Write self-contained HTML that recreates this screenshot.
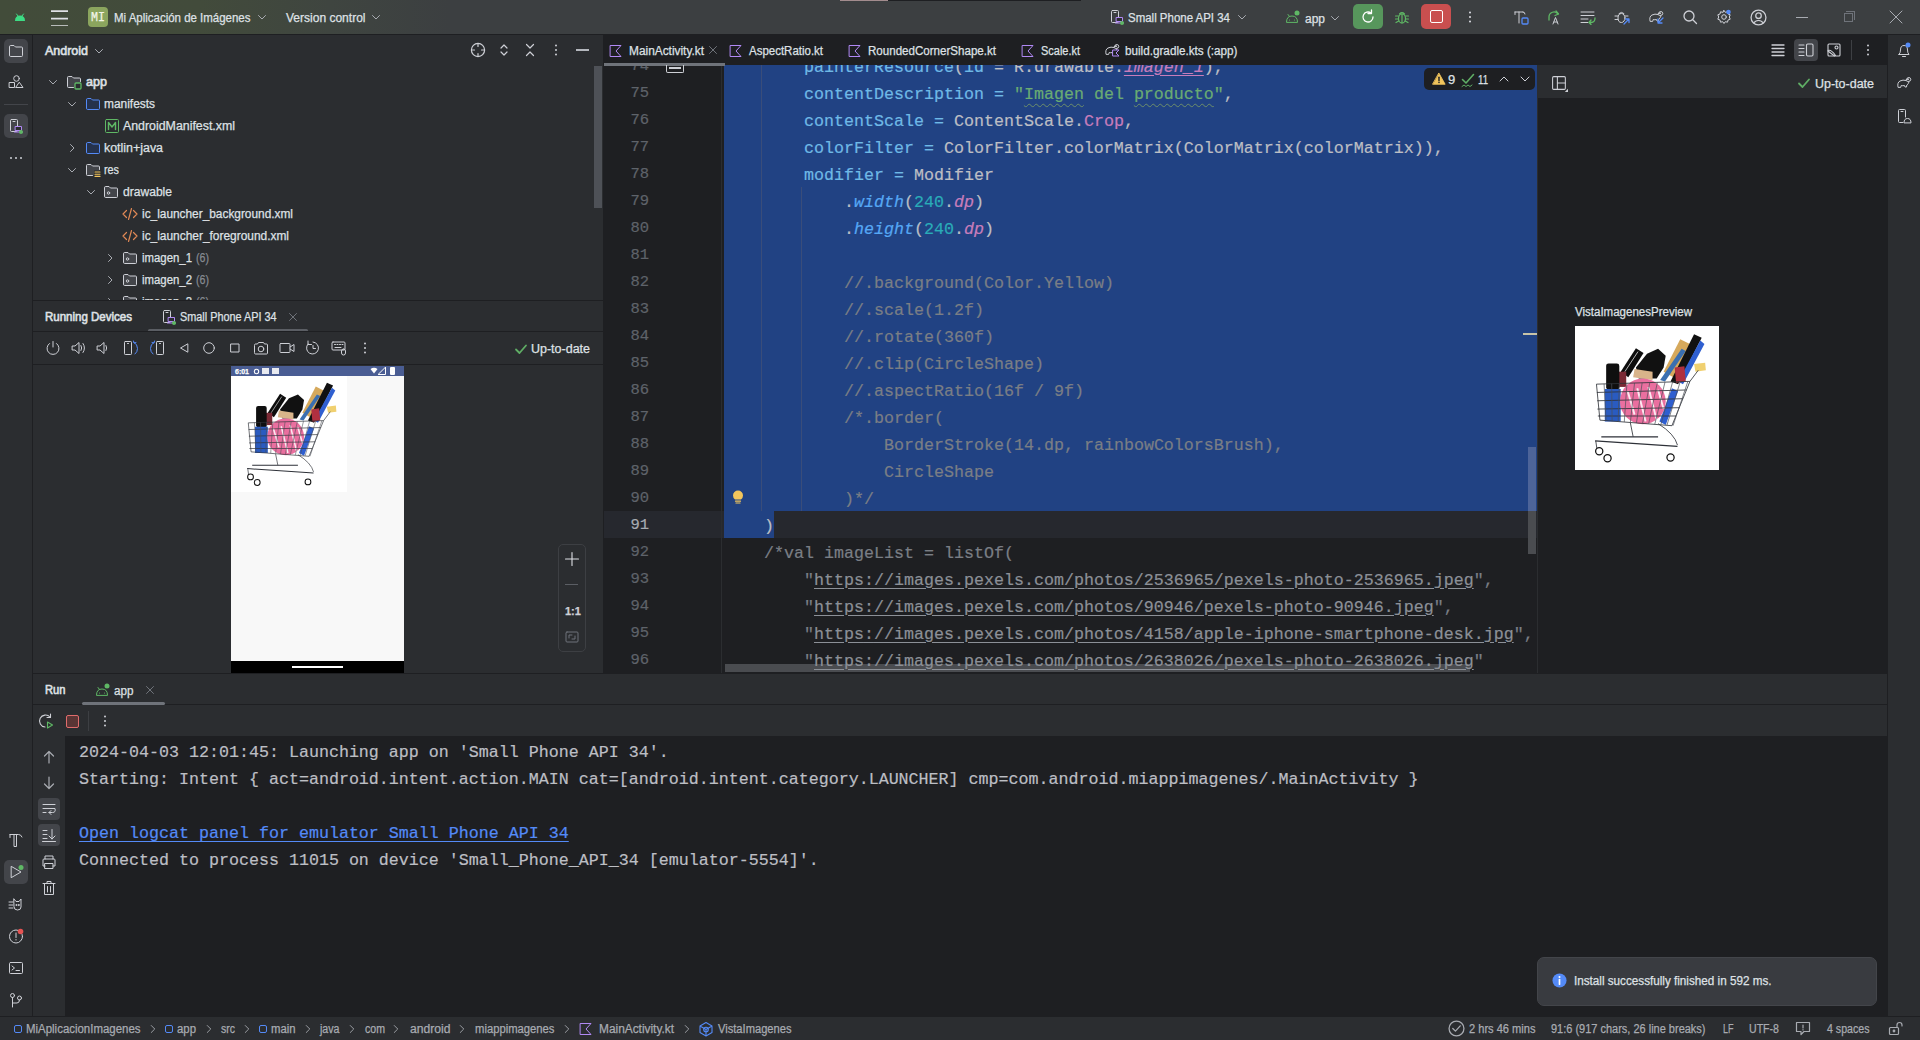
<!DOCTYPE html><html><head><meta charset="utf-8"><style>
*{margin:0;padding:0;box-sizing:border-box}
html,body{width:1920px;height:1040px;overflow:hidden;background:#2b2d30}
body{position:relative;font-family:"Liberation Sans",sans-serif}
body>div,body>span,body>svg{position:absolute}
.t{white-space:pre;-webkit-text-stroke:0.25px currentColor}
.c{position:absolute;white-space:pre;-webkit-text-stroke:0.2px currentColor;font-family:"Liberation Mono",monospace;font-size:16.67px;line-height:27px}
</style></head><body><div style="left:0px;top:0px;width:1920px;height:34px;background:linear-gradient(90deg,#424c3a 0px,#424b3b 200px,#3f4540 330px,#3c3f41 450px);"></div><div style="left:0px;top:34px;width:1920px;height:1px;background:#1e1f22;"></div><div style="left:840px;top:0px;width:48px;height:1px;background:#a38c8e;"></div><div style="left:888px;top:0px;width:193px;height:1px;background:#1e1f22;"></div><div style="left:0px;top:35px;width:32px;height:981px;background:#2b2d30;"></div><div style="left:32px;top:35px;width:1px;height:981px;background:#1e1f22;"></div><div style="left:33px;top:35px;width:570px;height:265px;background:#2b2d30;"></div><div style="left:594px;top:66px;width:8px;height:142px;background:#4e5157;border-radius:0"></div><div style="left:33px;top:300px;width:570px;height:1px;background:#1e1f22;"></div><div style="left:33px;top:301px;width:570px;height:372px;background:#2b2d30;"></div><div style="left:33px;top:331px;width:570px;height:1px;background:#1e1f22;"></div><div style="left:33px;top:364px;width:570px;height:1px;background:#1e1f22;"></div><div style="left:603px;top:35px;width:1px;height:638px;background:#1e1f22;"></div><div style="left:604px;top:65px;width:934px;height:608px;background:#1e1f22;"></div><div style="left:604px;top:511px;width:933px;height:27px;background:#26282e;"></div><div style="left:724px;top:65px;width:813px;height:446px;background:#214283;"></div><div style="left:724px;top:511px;width:50px;height:27px;background:#214283;"></div><div style="left:721px;top:65px;width:1px;height:608px;background:#2b2d30;"></div><div style="left:761px;top:65px;width:1px;height:446px;background:#3a4d7a;"></div><div style="left:801px;top:187px;width:1px;height:324px;background:#3a4d7a;"></div><div style="left:725px;top:664px;width:745px;height:8px;background:#4a4c50;"></div><div style="left:1528px;top:447px;width:8px;height:106px;background:#4a5c8a;border-radius:0"></div><div style="left:1523px;top:333px;width:14px;height:2px;background:#c8c4a8;"></div><div style="left:1537px;top:65px;width:1px;height:608px;background:#2b2d30;"></div><div style="left:1538px;top:35px;width:349px;height:30px;background:#1e1f22;"></div><div style="left:1538px;top:65px;width:349px;height:33px;background:#2b2d30;"></div><div style="left:1538px;top:98px;width:349px;height:575px;background:#1e1f22;"></div><div style="left:1887px;top:35px;width:1px;height:981px;background:#1e1f22;"></div><div style="left:1888px;top:35px;width:32px;height:981px;background:#2b2d30;"></div><div style="left:33px;top:673px;width:1854px;height:1px;background:#1e1f22;"></div><div style="left:33px;top:674px;width:1854px;height:342px;background:#2b2d30;"></div><div style="left:33px;top:704px;width:1854px;height:1px;background:#1e1f22;"></div><div style="left:33px;top:736px;width:1854px;height:280px;background:#1e1f22;"></div><div style="left:33px;top:736px;width:32px;height:280px;background:#2b2d30;"></div><div style="left:82px;top:702px;width:83px;height:3px;background:#6f737a;border-radius:2px"></div><div style="left:0px;top:1016px;width:1920px;height:1px;background:#1e1f22;"></div><div style="left:0px;top:1017px;width:1920px;height:23px;background:#2b2d30;"></div><div style="left:231px;top:366px;width:173px;height:306px;background:#f8f8f8;"></div><div style="left:231px;top:366px;width:173px;height:10px;background:#4a5d93;"></div><div style="left:231px;top:661px;width:173px;height:12px;background:#000000;"></div><div style="left:292px;top:666px;width:51px;height:2px;background:#ffffff;"></div><div style="left:1575px;top:326px;width:144px;height:144px;background:#ffffff;"></div><div style="left:1537px;top:957px;width:340px;height:49px;background:#393b40;border-radius:7px;border:1px solid #43454a"></div><div class="c" style="left:804px;top:53.5px"><span style="color:#6fb9e6;">painterResource</span><span style="color:#bcbec4;">(</span><span style="color:#6fb9e6;">id</span><span style="color:#bcbec4;"> = R.drawable.</span><span style="color:#c77dbb;font-style:italic;text-decoration:underline;text-decoration-thickness:1px;text-underline-offset:3px;">imagen_1</span><span style="color:#bcbec4;">),</span></div><div class="c" style="left:804px;top:80.5px"><span style="color:#6fb9e6;">contentDescription = </span><span style="color:#6aab73;">&quot;</span><span style="color:#6aab73;text-decoration:underline wavy #6d8f6a;text-decoration-thickness:1px;text-underline-offset:4px;">Imagen</span><span style="color:#6aab73;"> del </span><span style="color:#6aab73;text-decoration:underline wavy #6d8f6a;text-decoration-thickness:1px;text-underline-offset:4px;">producto</span><span style="color:#6aab73;">&quot;</span><span style="color:#bcbec4;">,</span></div><div class="c" style="left:804px;top:107.5px"><span style="color:#6fb9e6;">contentScale = </span><span style="color:#bcbec4;">ContentScale.</span><span style="color:#c77dbb;">Crop</span><span style="color:#bcbec4;">,</span></div><div class="c" style="left:804px;top:134.5px"><span style="color:#6fb9e6;">colorFilter = </span><span style="color:#bcbec4;">ColorFilter.colorMatrix(ColorMatrix(colorMatrix)),</span></div><div class="c" style="left:804px;top:161.5px"><span style="color:#6fb9e6;">modifier = </span><span style="color:#bcbec4;">Modifier</span></div><div class="c" style="left:844px;top:188.5px"><span style="color:#bcbec4;">.</span><span style="color:#56a8f5;font-style:italic;">width</span><span style="color:#bcbec4;">(</span><span style="color:#2aacb8;">240</span><span style="color:#bcbec4;">.</span><span style="color:#c77dbb;font-style:italic;">dp</span><span style="color:#bcbec4;">)</span></div><div class="c" style="left:844px;top:215.5px"><span style="color:#bcbec4;">.</span><span style="color:#56a8f5;font-style:italic;">height</span><span style="color:#bcbec4;">(</span><span style="color:#2aacb8;">240</span><span style="color:#bcbec4;">.</span><span style="color:#c77dbb;font-style:italic;">dp</span><span style="color:#bcbec4;">)</span></div><div class="c" style="left:844px;top:269.5px"><span style="color:#7a7e85;">//.background(Color.Yellow)</span></div><div class="c" style="left:844px;top:296.5px"><span style="color:#7a7e85;">//.scale(1.2f)</span></div><div class="c" style="left:844px;top:323.5px"><span style="color:#7a7e85;">//.rotate(360f)</span></div><div class="c" style="left:844px;top:350.5px"><span style="color:#7a7e85;">//.clip(CircleShape)</span></div><div class="c" style="left:844px;top:377.5px"><span style="color:#7a7e85;">//.aspectRatio(16f / 9f)</span></div><div class="c" style="left:844px;top:404.5px"><span style="color:#7a7e85;">/*.border(</span></div><div class="c" style="left:884px;top:431.5px"><span style="color:#7a7e85;">BorderStroke(14.dp, rainbowColorsBrush),</span></div><div class="c" style="left:884px;top:458.5px"><span style="color:#7a7e85;">CircleShape</span></div><div class="c" style="left:844px;top:485.5px"><span style="color:#7a7e85;">)*/</span></div><div class="c" style="left:764px;top:512.5px"><span style="color:#bcbec4;">)</span></div><div class="c" style="left:764px;top:539.5px"><span style="color:#7a7e85;">/*val imageList = listOf(</span></div><div class="c" style="left:804px;top:566.5px"><span style="color:#7a7e85;">&quot;</span><span style="color:#8c9097;text-decoration:underline;text-decoration-thickness:1px;text-underline-offset:3px;">https</span><span style="color:#8c9097;text-decoration:underline;text-decoration-thickness:1px;text-underline-offset:3px;">:</span><span style="color:#8c9097;text-decoration:underline;text-decoration-thickness:1px;text-underline-offset:3px;">//images.pexels.com/photos/2536965/pexels-photo-2536965.jpeg</span><span style="color:#7a7e85;">&quot;,</span></div><div class="c" style="left:804px;top:593.5px"><span style="color:#7a7e85;">&quot;</span><span style="color:#8c9097;text-decoration:underline;text-decoration-thickness:1px;text-underline-offset:3px;">https</span><span style="color:#8c9097;text-decoration:underline;text-decoration-thickness:1px;text-underline-offset:3px;">:</span><span style="color:#8c9097;text-decoration:underline;text-decoration-thickness:1px;text-underline-offset:3px;">//images.pexels.com/photos/90946/pexels-photo-90946.jpeg</span><span style="color:#7a7e85;">&quot;,</span></div><div class="c" style="left:804px;top:620.5px"><span style="color:#7a7e85;">&quot;</span><span style="color:#8c9097;text-decoration:underline;text-decoration-thickness:1px;text-underline-offset:3px;">https</span><span style="color:#8c9097;text-decoration:underline;text-decoration-thickness:1px;text-underline-offset:3px;">:</span><span style="color:#8c9097;text-decoration:underline;text-decoration-thickness:1px;text-underline-offset:3px;">//images.pexels.com/photos/4158/apple-iphone-smartphone-desk.jpg</span><span style="color:#7a7e85;">&quot;,</span></div><div class="c" style="left:804px;top:647.5px"><span style="color:#7a7e85;">&quot;</span><span style="color:#8c9097;text-decoration:underline;text-decoration-thickness:1px;text-underline-offset:3px;">https</span><span style="color:#8c9097;text-decoration:underline;text-decoration-thickness:1px;text-underline-offset:3px;">:</span><span style="color:#8c9097;text-decoration:underline;text-decoration-thickness:1px;text-underline-offset:3px;">//images.pexels.com/photos/2638026/pexels-photo-2638026.jpeg</span><span style="color:#7a7e85;">&quot;</span></div><div class="c" style="left:599px;width:50px;text-align:right;top:52.5px;font-size:15.5px;color:#5f636a">74</div><div class="c" style="left:599px;width:50px;text-align:right;top:79.5px;font-size:15.5px;color:#5f636a">75</div><div class="c" style="left:599px;width:50px;text-align:right;top:106.5px;font-size:15.5px;color:#5f636a">76</div><div class="c" style="left:599px;width:50px;text-align:right;top:133.5px;font-size:15.5px;color:#5f636a">77</div><div class="c" style="left:599px;width:50px;text-align:right;top:160.5px;font-size:15.5px;color:#5f636a">78</div><div class="c" style="left:599px;width:50px;text-align:right;top:187.5px;font-size:15.5px;color:#5f636a">79</div><div class="c" style="left:599px;width:50px;text-align:right;top:214.5px;font-size:15.5px;color:#5f636a">80</div><div class="c" style="left:599px;width:50px;text-align:right;top:241.5px;font-size:15.5px;color:#5f636a">81</div><div class="c" style="left:599px;width:50px;text-align:right;top:268.5px;font-size:15.5px;color:#5f636a">82</div><div class="c" style="left:599px;width:50px;text-align:right;top:295.5px;font-size:15.5px;color:#5f636a">83</div><div class="c" style="left:599px;width:50px;text-align:right;top:322.5px;font-size:15.5px;color:#5f636a">84</div><div class="c" style="left:599px;width:50px;text-align:right;top:349.5px;font-size:15.5px;color:#5f636a">85</div><div class="c" style="left:599px;width:50px;text-align:right;top:376.5px;font-size:15.5px;color:#5f636a">86</div><div class="c" style="left:599px;width:50px;text-align:right;top:403.5px;font-size:15.5px;color:#5f636a">87</div><div class="c" style="left:599px;width:50px;text-align:right;top:430.5px;font-size:15.5px;color:#5f636a">88</div><div class="c" style="left:599px;width:50px;text-align:right;top:457.5px;font-size:15.5px;color:#5f636a">89</div><div class="c" style="left:599px;width:50px;text-align:right;top:484.5px;font-size:15.5px;color:#5f636a">90</div><div class="c" style="left:599px;width:50px;text-align:right;top:511.5px;font-size:15.5px;color:#a8abb1">91</div><div class="c" style="left:599px;width:50px;text-align:right;top:538.5px;font-size:15.5px;color:#5f636a">92</div><div class="c" style="left:599px;width:50px;text-align:right;top:565.5px;font-size:15.5px;color:#5f636a">93</div><div class="c" style="left:599px;width:50px;text-align:right;top:592.5px;font-size:15.5px;color:#5f636a">94</div><div class="c" style="left:599px;width:50px;text-align:right;top:619.5px;font-size:15.5px;color:#5f636a">95</div><div class="c" style="left:599px;width:50px;text-align:right;top:646.5px;font-size:15.5px;color:#5f636a">96</div><div style="left:604px;top:35px;width:934px;height:30px;background:#1e1f22;"></div><div style="left:604px;top:63px;width:121px;height:3px;background:#6f737a;"></div><span class="t" style="left:114px;top:8.3px;line-height:20px;font-size:12.5px;color:#dfe1e5;transform:scaleX(0.9179);transform-origin:0 50%;">Mi Aplicación de Imágenes</span><span class="t" style="left:286px;top:8.3px;line-height:20px;font-size:12.5px;color:#dfe1e5;transform:scaleX(0.9615);transform-origin:0 50%;">Version control</span><span class="t" style="left:1128px;top:8.3px;line-height:20px;font-size:12.5px;color:#dfe1e5;transform:scaleX(0.9174);transform-origin:0 50%;">Small Phone API 34</span><span class="t" style="left:1305px;top:8.5px;line-height:20px;font-size:12.5px;color:#dfe1e5;transform:scaleX(0.9588);transform-origin:0 50%;">app</span><span class="t" style="left:629px;top:41.0px;line-height:20px;font-size:12.5px;color:#dfe1e5;transform:scaleX(0.9499);transform-origin:0 50%;">MainActivity.kt</span><span class="t" style="left:749px;top:41.0px;line-height:20px;font-size:12.5px;color:#dfe1e5;transform:scaleX(0.9182);transform-origin:0 50%;">AspectRatio.kt</span><span class="t" style="left:868px;top:41.0px;line-height:20px;font-size:12.5px;color:#dfe1e5;transform:scaleX(0.9255);transform-origin:0 50%;">RoundedCornerShape.kt</span><span class="t" style="left:1041px;top:41.0px;line-height:20px;font-size:12.5px;color:#dfe1e5;transform:scaleX(0.8770);transform-origin:0 50%;">Scale.kt</span><span class="t" style="left:1125px;top:41.0px;line-height:20px;font-size:12.5px;color:#dfe1e5;transform:scaleX(0.9359);transform-origin:0 50%;">build.gradle.kts (:app)</span><span class="t" style="left:45px;top:41.0px;line-height:20px;font-size:12.5px;-webkit-text-stroke:0.6px currentColor;color:#dfe1e5;transform:scaleX(0.9978);transform-origin:0 50%;">Android</span><span class="t" style="left:86px;top:71.5px;line-height:20px;font-size:12.5px;-webkit-text-stroke:0.6px currentColor;color:#dfe1e5;letter-spacing:0.047px;">app</span><span class="t" style="left:104px;top:93.5px;line-height:20px;font-size:12.5px;color:#dfe1e5;transform:scaleX(0.9533);transform-origin:0 50%;">manifests</span><span class="t" style="left:123px;top:115.5px;line-height:20px;font-size:12.5px;color:#dfe1e5;transform:scaleX(0.9890);transform-origin:0 50%;">AndroidManifest.xml</span><span class="t" style="left:104px;top:137.5px;line-height:20px;font-size:12.5px;color:#dfe1e5;transform:scaleX(0.9929);transform-origin:0 50%;">kotlin+java</span><span class="t" style="left:104px;top:159.5px;line-height:20px;font-size:12.5px;color:#dfe1e5;transform:scaleX(0.8633);transform-origin:0 50%;">res</span><span class="t" style="left:123px;top:181.5px;line-height:20px;font-size:12.5px;color:#dfe1e5;transform:scaleX(0.9658);transform-origin:0 50%;">drawable</span><span class="t" style="left:142px;top:203.5px;line-height:20px;font-size:12.5px;color:#dfe1e5;transform:scaleX(0.9489);transform-origin:0 50%;">ic_launcher_background.xml</span><span class="t" style="left:142px;top:225.5px;line-height:20px;font-size:12.5px;color:#dfe1e5;transform:scaleX(0.9529);transform-origin:0 50%;">ic_launcher_foreground.xml</span><span class="t" style="left:142px;top:247.5px;line-height:20px;font-size:12.5px;color:#dfe1e5;transform:scaleX(0.9106);transform-origin:0 50%;">imagen_1</span><span class="t" style="left:142px;top:269.5px;line-height:20px;font-size:12.5px;color:#dfe1e5;transform:scaleX(0.9106);transform-origin:0 50%;">imagen_2</span><span class="t" style="left:142px;top:291.5px;line-height:20px;font-size:12.5px;color:#dfe1e5;transform:scaleX(0.9106);transform-origin:0 50%;">imagen_3</span><span class="t" style="left:196px;top:247.5px;line-height:20px;font-size:12.5px;color:#868a91;transform:scaleX(0.8507);transform-origin:0 50%;">(6)</span><span class="t" style="left:196px;top:269.5px;line-height:20px;font-size:12.5px;color:#868a91;transform:scaleX(0.8507);transform-origin:0 50%;">(6)</span><span class="t" style="left:196px;top:291.5px;line-height:20px;font-size:12.5px;color:#868a91;transform:scaleX(0.8507);transform-origin:0 50%;">(6)</span><div style="left:33px;top:300px;width:570px;height:1px;background:#1e1f22;"></div><div style="left:33px;top:301px;width:570px;height:30px;background:#2b2d30;"></div><span class="t" style="left:45px;top:307.0px;line-height:20px;font-size:12.5px;-webkit-text-stroke:0.6px currentColor;color:#dfe1e5;transform:scaleX(0.9206);transform-origin:0 50%;">Running Devices</span><span class="t" style="left:180px;top:307.0px;line-height:20px;font-size:12.5px;color:#dfe1e5;transform:scaleX(0.8679);transform-origin:0 50%;">Small Phone API 34</span><div style="left:148px;top:329px;width:160px;height:3px;background:#5b5e64;border-radius:2px"></div><div style="left:33px;top:331px;width:570px;height:1px;background:#1e1f22;"></div><span class="t" style="left:531px;top:338.5px;line-height:20px;font-size:12.5px;color:#dfe1e5;transform:scaleX(0.9989);transform-origin:0 50%;">Up-to-date</span><span class="t" style="left:565px;top:601.0px;line-height:20px;font-size:11px;font-weight:700;color:#ced0d6;">1:1</span><div style="left:558px;top:544px;width:28px;height:108px;background:transparent;border:1px solid #3d3f43;border-radius:5px"></div><span class="t" style="left:1815px;top:73.5px;line-height:20px;font-size:12.5px;color:#dfe1e5;transform:scaleX(0.9989);transform-origin:0 50%;">Up-to-date</span><span class="t" style="left:1575px;top:302.0px;line-height:20px;font-size:12px;color:#dfe1e5;transform:scaleX(0.9602);transform-origin:0 50%;">VistaImagenesPreview</span><span class="t" style="left:45px;top:680.0px;line-height:20px;font-size:12.5px;-webkit-text-stroke:0.6px currentColor;color:#dfe1e5;transform:scaleX(0.8937);transform-origin:0 50%;">Run</span><span class="t" style="left:114px;top:680.5px;line-height:20px;font-size:12.5px;color:#dfe1e5;transform:scaleX(0.9348);transform-origin:0 50%;">app</span><div class="c" style="left:79px;top:739.0px;color:#bcbec4;">2024-04-03 12:01:45: Launching app on &#x27;Small Phone API 34&#x27;.</div><div class="c" style="left:79px;top:766.0px;color:#bcbec4;">Starting: Intent { act=android.intent.action.MAIN cat=[android.intent.category.LAUNCHER] cmp=com.android.miappimagenes/.MainActivity }</div><div class="c" style="left:79px;top:820.0px;color:#548af7;text-decoration:underline;text-decoration-thickness:1px;text-underline-offset:3px;">Open logcat panel for emulator Small Phone API 34</div><div class="c" style="left:79px;top:847.0px;color:#bcbec4;">Connected to process 11015 on device &#x27;Small_Phone_API_34 [emulator-5554]&#x27;.</div><span class="t" style="left:1573.5px;top:971.0px;line-height:20px;font-size:12.5px;color:#dfe1e5;transform:scaleX(0.9350);transform-origin:0 50%;">Install successfully finished in 592 ms.</span><span class="t" style="left:26px;top:1019.0px;line-height:20px;font-size:12.5px;color:#a8abb1;transform:scaleX(0.9155);transform-origin:0 50%;">MiAplicacionImagenes</span><span class="t" style="left:177px;top:1019.0px;line-height:20px;font-size:12.5px;color:#a8abb1;transform:scaleX(0.9109);transform-origin:0 50%;">app</span><span class="t" style="left:221px;top:1019.0px;line-height:20px;font-size:12.5px;color:#a8abb1;transform:scaleX(0.8397);transform-origin:0 50%;">src</span><span class="t" style="left:271px;top:1019.0px;line-height:20px;font-size:12.5px;color:#a8abb1;transform:scaleX(0.9043);transform-origin:0 50%;">main</span><span class="t" style="left:320px;top:1019.0px;line-height:20px;font-size:12.5px;color:#a8abb1;transform:scaleX(0.8501);transform-origin:0 50%;">java</span><span class="t" style="left:364.5px;top:1019.0px;line-height:20px;font-size:12.5px;color:#a8abb1;transform:scaleX(0.8466);transform-origin:0 50%;">com</span><span class="t" style="left:409.5px;top:1019.0px;line-height:20px;font-size:12.5px;color:#a8abb1;transform:scaleX(0.9712);transform-origin:0 50%;">android</span><span class="t" style="left:474.5px;top:1019.0px;line-height:20px;font-size:12.5px;color:#a8abb1;transform:scaleX(0.9008);transform-origin:0 50%;">miappimagenes</span><span class="t" style="left:599px;top:1019.0px;line-height:20px;font-size:12.5px;color:#a8abb1;transform:scaleX(0.9499);transform-origin:0 50%;">MainActivity.kt</span><span class="t" style="left:718px;top:1019.0px;line-height:20px;font-size:12.5px;color:#a8abb1;transform:scaleX(0.8912);transform-origin:0 50%;">VistaImagenes</span><span class="t" style="left:1469px;top:1018.5px;line-height:20px;font-size:12.5px;color:#a8abb1;transform:scaleX(0.8863);transform-origin:0 50%;">2 hrs 46 mins</span><span class="t" style="left:1551px;top:1018.5px;line-height:20px;font-size:12.5px;color:#a8abb1;transform:scaleX(0.8789);transform-origin:0 50%;">91:6 (917 chars, 26 line breaks)</span><span class="t" style="left:1722.5px;top:1018.5px;line-height:20px;font-size:12.5px;color:#a8abb1;transform:scaleX(0.7195);transform-origin:0 50%;">LF</span><span class="t" style="left:1749px;top:1018.5px;line-height:20px;font-size:12.5px;color:#a8abb1;transform:scaleX(0.8469);transform-origin:0 50%;">UTF-8</span><span class="t" style="left:1827px;top:1018.5px;line-height:20px;font-size:12.5px;color:#a8abb1;transform:scaleX(0.8495);transform-origin:0 50%;">4 spaces</span><svg style="left:12.0px;top:9.0px" width="16" height="16" viewBox="0 0 16 16" fill="none" stroke="#3ddc84" stroke-width="1" stroke-linecap="round" stroke-linejoin="round"><path d="M3 12 Q3 6.5 8 6.5 Q13 6.5 13 12 Z" fill="#3ddc84" stroke="none"/><path d="M4.5 5 L6 7 M11.5 5 L10 7" stroke="#3ddc84"/></svg><svg style="left:50.5px;top:8.5px" width="17" height="17" viewBox="0 0 16 16" fill="none" stroke="#dfe1e5" stroke-width="1" stroke-linecap="round" stroke-linejoin="round"><path d="M0 2 H16 M0 9 H16 M0 16 H16" stroke-width="1.6"/></svg><div style="left:88px;top:7px;width:20px;height:20px;background:#8ba55e;border-radius:4px"></div><span class="t" style="left:90.5px;top:7.5px;line-height:20px;font-size:13px;font-family:'Liberation Mono', monospace;color:#f2f5e8;transform:scaleX(0.8969);transform-origin:0 50%;">MI</span><svg style="left:254.0px;top:9.0px" width="16" height="16" viewBox="0 0 16 16" fill="none" stroke="#a8abb1" stroke-width="1" stroke-linecap="round" stroke-linejoin="round"><path d="M4.5 6.5 L8 10 L11.5 6.5"/></svg><svg style="left:368.0px;top:9.0px" width="16" height="16" viewBox="0 0 16 16" fill="none" stroke="#a8abb1" stroke-width="1" stroke-linecap="round" stroke-linejoin="round"><path d="M4.5 6.5 L8 10 L11.5 6.5"/></svg><svg style="left:1234.0px;top:9.0px" width="16" height="16" viewBox="0 0 16 16" fill="none" stroke="#a8abb1" stroke-width="1" stroke-linecap="round" stroke-linejoin="round"><path d="M4.5 6.5 L8 10 L11.5 6.5"/></svg><svg style="left:1327.0px;top:9.5px" width="16" height="16" viewBox="0 0 16 16" fill="none" stroke="#a8abb1" stroke-width="1" stroke-linecap="round" stroke-linejoin="round"><path d="M4.5 6.5 L8 10 L11.5 6.5"/></svg><svg style="left:1109.0px;top:9.0px" width="16" height="16" viewBox="0 0 16 16" fill="none" stroke="#ced0d6" stroke-width="1" stroke-linecap="round" stroke-linejoin="round"><rect x="2.5" y="1.5" width="7" height="12" rx="1"/><path d="M5 3.5 H7"/><rect x="7.5" y="8.5" width="6" height="4" fill="#2b2d30" stroke="#b189f5"/><path d="M6.5 14 H14.5" stroke="#b189f5"/><circle cx="13" cy="14" r="2" fill="#5fb865" stroke="none"/></svg><svg style="left:1284.0px;top:9.0px" width="16" height="16" viewBox="0 0 16 16" fill="none" stroke="#ced0d6" stroke-width="1" stroke-linecap="round" stroke-linejoin="round"><path d="M2.5 13 Q2.5 7 8 7 Q13.5 7 13.5 13 Z" stroke="#5fb865"/><path d="M4 5.5 L5.5 7.5" stroke="#5fb865"/><circle cx="5.5" cy="11" r=".6" fill="#5fb865" stroke="none"/><circle cx="10.5" cy="11" r=".6" fill="#5fb865" stroke="none"/><circle cx="13" cy="4" r="2.5" fill="#5fb865" stroke="none"/></svg><div style="left:1353px;top:4px;width:30px;height:25px;background:#57965c;border-radius:5px"></div><svg style="left:1360.0px;top:8.5px" width="16" height="16" viewBox="0 0 16 16" fill="none" stroke="#ffffff" stroke-width="1.3" stroke-linecap="round" stroke-linejoin="round"><path d="M13 8 A5 5 0 1 1 11 4"/><path d="M11.5 1 V4.5 H8"/></svg><svg style="left:1394.0px;top:9.0px" width="16" height="16" viewBox="0 0 16 16" fill="none" stroke="#5fb865" stroke-width="1.2" stroke-linecap="round" stroke-linejoin="round"><ellipse cx="8" cy="9.5" rx="3.5" ry="4.5"/><path d="M5.5 5 Q8 2.5 10.5 5 M1.5 7 H4.5 M11.5 7 H14.5 M1.5 10 H4.5 M11.5 10 H14.5 M2 13.5 L4.8 12 M14 13.5 L11.2 12 M8 5.5 V14"/></svg><div style="left:1421px;top:4px;width:30px;height:25px;background:#c94f4f;border-radius:5px"></div><div style="left:1430px;top:10px;width:13px;height:13px;background:transparent;border:1.6px solid #ffffff;border-radius:2px"></div><svg style="left:1462.0px;top:9.0px" width="16" height="16" viewBox="0 0 16 16" fill="none" stroke="#ced0d6" stroke-width="1" stroke-linecap="round" stroke-linejoin="round"><circle cx="8" cy="3.5" r="1" fill="#dfe1e5" stroke="none"/><circle cx="8" cy="8" r="1" fill="#dfe1e5" stroke="none"/><circle cx="8" cy="12.5" r="1" fill="#dfe1e5" stroke="none"/></svg><svg style="left:1513.0px;top:9.0px" width="16" height="16" viewBox="0 0 16 16" fill="none" stroke="#ced0d6" stroke-width="1" stroke-linecap="round" stroke-linejoin="round"><path d="M2 3 H10 M6 3 V14 M2 3 V5.5 M10 3 Q12 3 12 5"/><rect x="9" y="9" width="6" height="6" rx="1" stroke="#548af7" stroke-width="1.3"/></svg><svg style="left:1546.0px;top:9.0px" width="16" height="16" viewBox="0 0 16 16" fill="none" stroke="#ced0d6" stroke-width="1" stroke-linecap="round" stroke-linejoin="round"><path d="M3 11 V8 A5 5 0 0 1 12 5" stroke="#5fb865" stroke-width="1.3"/><path d="M10 2 L12.5 5 L9 6.5" stroke="#5fb865" stroke-width="1.3"/><path d="M7 15 L9.5 8.5 L12 15 M8 13 H11"/></svg><svg style="left:1580.0px;top:9.0px" width="16" height="16" viewBox="0 0 16 16" fill="none" stroke="#ced0d6" stroke-width="1" stroke-linecap="round" stroke-linejoin="round"><path d="M1 3 H14 M1 6.5 H14 M1 10 H8 M1 13.5 H8"/><path d="M15 9 Q15 13.5 11 13.5 H9 M11 11 L9 13.5 L11 15.5" stroke="#5fb865" stroke-width="1.3"/></svg><svg style="left:1614.0px;top:9.0px" width="16" height="16" viewBox="0 0 16 16" fill="none" stroke="#ced0d6" stroke-width="1" stroke-linecap="round" stroke-linejoin="round"><ellipse cx="7.5" cy="9" rx="3.5" ry="4.5"/><path d="M5 4.5 Q7.5 2 10 4.5 M1 7 H4 M1 10.5 H4 M11 7 H14"/><path d="M10 15 L15 10 M11.5 10 H15 V13.5" stroke="#548af7" stroke-width="1.3"/></svg><svg style="left:1648.0px;top:8.0px" width="16" height="16" viewBox="0 0 16 16" fill="none" stroke="#ced0d6" stroke-width="1" stroke-linecap="round" stroke-linejoin="round"><path d="M2 13 Q1 8.5 4 7 Q7 5.5 10 6.5 Q10.5 3.5 13 3.5 Q15 3.8 14.8 5.8 Q14.5 7.2 13.2 7 Q12.8 10 10.8 11 L10.5 13 H9 L8.5 11.5 Q6.8 12 5.2 11.5 L4.8 13 Z M10 6.5 Q11 8 12.5 7.5"/><circle cx="11.8" cy="5.2" r=".5" fill="#ced0d6"/><path d="M10 15 L15 10 M10 11 V15 H14" stroke="#548af7" stroke-width="1.3"/></svg><svg style="left:1682.0px;top:9.0px" width="16" height="16" viewBox="0 0 16 16" fill="none" stroke="#ced0d6" stroke-width="1.3" stroke-linecap="round" stroke-linejoin="round"><circle cx="7" cy="7" r="5"/><path d="M10.8 10.8 L14.5 14.5"/></svg><svg style="left:1716.0px;top:9.0px" width="16" height="16" viewBox="0 0 16 16" fill="none" stroke="#ced0d6" stroke-width="1" stroke-linecap="round" stroke-linejoin="round"><path d="M8 1.5 L9.3 3.3 L11.5 2.8 L12 5 L14.2 5.8 L13.3 8 L14.2 10.2 L12 11 L11.5 13.2 L9.3 12.7 L8 14.5 L6.7 12.7 L4.5 13.2 L4 11 L1.8 10.2 L2.7 8 L1.8 5.8 L4 5 L4.5 2.8 L6.7 3.3 Z"/><circle cx="8" cy="8" r="2.3"/><circle cx="12.5" cy="3" r="2.3" fill="#548af7" stroke="none"/></svg><svg style="left:1749.5px;top:8.5px" width="17" height="17" viewBox="0 0 16 16" fill="none" stroke="#ced0d6" stroke-width="1.2" stroke-linecap="round" stroke-linejoin="round"><circle cx="8" cy="8" r="7"/><circle cx="8" cy="6.3" r="2.6"/><path d="M3.5 13 Q8 8.5 12.5 13"/></svg><div style="left:1796px;top:17px;width:12px;height:1px;background:#a8abb1;"></div><div style="left:1844px;top:13px;width:9px;height:9px;background:transparent;border:1px solid #6f737a"></div><div style="left:1846px;top:11px;width:9px;height:9px;background:transparent;border-top:1px solid #6f737a;border-right:1px solid #6f737a"></div><svg style="left:1888.0px;top:9.0px" width="16" height="16" viewBox="0 0 16 16" fill="none" stroke="#a8abb1" stroke-width="1" stroke-linecap="round" stroke-linejoin="round"><path d="M2 2 L14 14 M14 2 L2 14"/></svg><svg style="left:91.0px;top:43.0px" width="16" height="16" viewBox="0 0 16 16" fill="none" stroke="#a8abb1" stroke-width="1" stroke-linecap="round" stroke-linejoin="round"><path d="M4.5 6.5 L8 10 L11.5 6.5"/></svg><svg style="left:470.0px;top:42.0px" width="16" height="16" viewBox="0 0 16 16" fill="none" stroke="#ced0d6" stroke-width="1.2" stroke-linecap="round" stroke-linejoin="round"><circle cx="8" cy="8" r="6.6"/><path d="M8 1.5 V4.5 M8 11.5 V14.5 M1.5 8 H4.5 M11.5 8 H14.5"/></svg><svg style="left:496.0px;top:42.0px" width="16" height="16" viewBox="0 0 16 16" fill="none" stroke="#ced0d6" stroke-width="1.2" stroke-linecap="round" stroke-linejoin="round"><path d="M5 6 L8 3 L11 6 M5 10 L8 13 L11 10"/></svg><svg style="left:522.0px;top:42.0px" width="16" height="16" viewBox="0 0 16 16" fill="none" stroke="#ced0d6" stroke-width="1.2" stroke-linecap="round" stroke-linejoin="round"><path d="M4.5 2.5 L8 6 L11.5 2.5 M4.5 13.5 L8 10 L11.5 13.5"/></svg><svg style="left:548.0px;top:42.0px" width="16" height="16" viewBox="0 0 16 16" fill="none" stroke="#ced0d6" stroke-width="1" stroke-linecap="round" stroke-linejoin="round"><circle cx="8" cy="3.5" r="1" fill="#ced0d6" stroke="none"/><circle cx="8" cy="8" r="1" fill="#ced0d6" stroke="none"/><circle cx="8" cy="12.5" r="1" fill="#ced0d6" stroke="none"/></svg><div style="left:576px;top:49.3px;width:13px;height:1.4px;background:#b4b7bd;"></div><svg style="left:45.0px;top:73.5px" width="16" height="16" viewBox="0 0 16 16" fill="none" stroke="#a8abb1" stroke-width="1" stroke-linecap="round" stroke-linejoin="round"><path d="M4.5 6.5 L8 10 L11.5 6.5"/></svg><svg style="left:64.0px;top:95.5px" width="16" height="16" viewBox="0 0 16 16" fill="none" stroke="#a8abb1" stroke-width="1" stroke-linecap="round" stroke-linejoin="round"><path d="M4.5 6.5 L8 10 L11.5 6.5"/></svg><svg style="left:64.0px;top:161.5px" width="16" height="16" viewBox="0 0 16 16" fill="none" stroke="#a8abb1" stroke-width="1" stroke-linecap="round" stroke-linejoin="round"><path d="M4.5 6.5 L8 10 L11.5 6.5"/></svg><svg style="left:83.0px;top:183.5px" width="16" height="16" viewBox="0 0 16 16" fill="none" stroke="#a8abb1" stroke-width="1" stroke-linecap="round" stroke-linejoin="round"><path d="M4.5 6.5 L8 10 L11.5 6.5"/></svg><svg style="left:64.0px;top:139.5px" width="16" height="16" viewBox="0 0 16 16" fill="none" stroke="#a8abb1" stroke-width="1" stroke-linecap="round" stroke-linejoin="round"><path d="M6.5 4.5 L10 8 L6.5 11.5"/></svg><svg style="left:102.0px;top:249.5px" width="16" height="16" viewBox="0 0 16 16" fill="none" stroke="#a8abb1" stroke-width="1" stroke-linecap="round" stroke-linejoin="round"><path d="M6.5 4.5 L10 8 L6.5 11.5"/></svg><svg style="left:102.0px;top:271.5px" width="16" height="16" viewBox="0 0 16 16" fill="none" stroke="#a8abb1" stroke-width="1" stroke-linecap="round" stroke-linejoin="round"><path d="M6.5 4.5 L10 8 L6.5 11.5"/></svg><svg style="left:102.0px;top:293.5px" width="16" height="16" viewBox="0 0 16 16" fill="none" stroke="#a8abb1" stroke-width="1" stroke-linecap="round" stroke-linejoin="round"><path d="M6.5 4.5 L10 8 L6.5 11.5"/></svg><svg style="left:66.0px;top:73.5px" width="16" height="16" viewBox="0 0 16 16" fill="none" stroke="#ced0d6" stroke-width="1" stroke-linecap="round" stroke-linejoin="round"><path d="M1.5 3.5 Q1.5 2.5 2.5 2.5 H6 L7.5 4 H13.5 Q14.5 4 14.5 5 V12.5 Q14.5 13.5 13.5 13.5 H2.5 Q1.5 13.5 1.5 12.5 Z" fill="#43454a" stroke="none"/><path d="M14.5 7.5 V5 Q14.5 4 13.5 4 H7.5 L6 2.5 H2.5 Q1.5 2.5 1.5 3.5 V12.5 Q1.5 13.5 2.5 13.5 H7.5"/><rect x="9" y="9" width="6" height="6" rx="1" fill="#2b2d30" stroke="#5fb865" stroke-width="1.3"/></svg><svg style="left:85.0px;top:95.5px" width="16" height="16" viewBox="0 0 16 16" fill="none" stroke="#548af7" stroke-width="1" stroke-linecap="round" stroke-linejoin="round"><path d="M1.5 3.5 Q1.5 2.5 2.5 2.5 H6 L7.5 4 H13.5 Q14.5 4 14.5 5 V12.5 Q14.5 13.5 13.5 13.5 H2.5 Q1.5 13.5 1.5 12.5 Z" fill="#25324d"/></svg><svg style="left:85.0px;top:139.5px" width="16" height="16" viewBox="0 0 16 16" fill="none" stroke="#548af7" stroke-width="1" stroke-linecap="round" stroke-linejoin="round"><path d="M1.5 3.5 Q1.5 2.5 2.5 2.5 H6 L7.5 4 H13.5 Q14.5 4 14.5 5 V12.5 Q14.5 13.5 13.5 13.5 H2.5 Q1.5 13.5 1.5 12.5 Z" fill="#25324d"/></svg><svg style="left:85.0px;top:161.5px" width="16" height="16" viewBox="0 0 16 16" fill="none" stroke="#ced0d6" stroke-width="1" stroke-linecap="round" stroke-linejoin="round"><path d="M1.5 3.5 Q1.5 2.5 2.5 2.5 H6 L7.5 4 H13.5 Q14.5 4 14.5 5 V12.5 Q14.5 13.5 13.5 13.5 H2.5 Q1.5 13.5 1.5 12.5 Z" fill="#43454a" stroke="none"/><path d="M14.5 7.5 V5 Q14.5 4 13.5 4 H7.5 L6 2.5 H2.5 Q1.5 2.5 1.5 3.5 V12.5 Q1.5 13.5 2.5 13.5 H7.5"/><rect x="9" y="8.5" width="7" height="7" fill="#2b2d30" stroke="none"/><path d="M10 10 H15 M10 12.2 H15 M10 14.4 H15" stroke="#f2c55c" stroke-width="1.1"/></svg><svg style="left:104.0px;top:117.5px" width="16" height="16" viewBox="0 0 16 16" fill="none" stroke="#ced0d6" stroke-width="1" stroke-linecap="round" stroke-linejoin="round"><rect x="1.5" y="1.5" width="13" height="13" rx="1" stroke="#5fb865"/><path d="M4.5 11.5 V4.5 L8 9 L11.5 4.5 V11.5" stroke="#5fb865" stroke-width="1.4" fill="#5fb865" fill-opacity=".0"/></svg><svg style="left:103.0px;top:183.5px" width="16" height="16" viewBox="0 0 16 16" fill="none" stroke="#ced0d6" stroke-width="1" stroke-linecap="round" stroke-linejoin="round"><path d="M1.5 3.5 Q1.5 2.5 2.5 2.5 H6 L7.5 4 H13.5 Q14.5 4 14.5 5 V12.5 Q14.5 13.5 13.5 13.5 H2.5 Q1.5 13.5 1.5 12.5 Z" fill="#43454a"/><circle cx="5.5" cy="9" r="1.2"/></svg><svg style="left:122.0px;top:249.5px" width="16" height="16" viewBox="0 0 16 16" fill="none" stroke="#ced0d6" stroke-width="1" stroke-linecap="round" stroke-linejoin="round"><path d="M1.5 3.5 Q1.5 2.5 2.5 2.5 H6 L7.5 4 H13.5 Q14.5 4 14.5 5 V12.5 Q14.5 13.5 13.5 13.5 H2.5 Q1.5 13.5 1.5 12.5 Z" fill="#43454a"/><circle cx="5.5" cy="9" r="1.2"/></svg><svg style="left:122.0px;top:271.5px" width="16" height="16" viewBox="0 0 16 16" fill="none" stroke="#ced0d6" stroke-width="1" stroke-linecap="round" stroke-linejoin="round"><path d="M1.5 3.5 Q1.5 2.5 2.5 2.5 H6 L7.5 4 H13.5 Q14.5 4 14.5 5 V12.5 Q14.5 13.5 13.5 13.5 H2.5 Q1.5 13.5 1.5 12.5 Z" fill="#43454a"/><circle cx="5.5" cy="9" r="1.2"/></svg><svg style="left:122.0px;top:293.5px" width="16" height="16" viewBox="0 0 16 16" fill="none" stroke="#ced0d6" stroke-width="1" stroke-linecap="round" stroke-linejoin="round"><path d="M1.5 3.5 Q1.5 2.5 2.5 2.5 H6 L7.5 4 H13.5 Q14.5 4 14.5 5 V12.5 Q14.5 13.5 13.5 13.5 H2.5 Q1.5 13.5 1.5 12.5 Z" fill="#43454a"/><circle cx="5.5" cy="9" r="1.2"/></svg><svg style="left:122.0px;top:205.5px" width="16" height="16" viewBox="0 0 16 16" fill="none" stroke="#ced0d6" stroke-width="1" stroke-linecap="round" stroke-linejoin="round"><path d="M4.5 4.5 L1 8 L4.5 11.5 M11.5 4.5 L15 8 L11.5 11.5 M9.5 2.5 L6.5 13.5" stroke="#e08855" stroke-width="1.2"/></svg><svg style="left:122.0px;top:227.5px" width="16" height="16" viewBox="0 0 16 16" fill="none" stroke="#ced0d6" stroke-width="1" stroke-linecap="round" stroke-linejoin="round"><path d="M4.5 4.5 L1 8 L4.5 11.5 M11.5 4.5 L15 8 L11.5 11.5 M9.5 2.5 L6.5 13.5" stroke="#e08855" stroke-width="1.2"/></svg><div style="left:33px;top:300px;width:570px;height:1px;background:#1e1f22;"></div><div style="left:33px;top:301px;width:570px;height:30px;background:#2b2d30;"></div><span class="t" style="left:45px;top:307.0px;line-height:20px;font-size:12.5px;-webkit-text-stroke:0.6px currentColor;color:#dfe1e5;transform:scaleX(0.9206);transform-origin:0 50%;">Running Devices</span><span class="t" style="left:180px;top:307.0px;line-height:20px;font-size:12.5px;color:#dfe1e5;transform:scaleX(0.8679);transform-origin:0 50%;">Small Phone API 34</span><div style="left:148px;top:329px;width:160px;height:3px;background:#5b5e64;border-radius:2px"></div><div style="left:33px;top:331px;width:570px;height:1px;background:#1e1f22;"></div><svg style="left:161.0px;top:309.0px" width="16" height="16" viewBox="0 0 16 16" fill="none" stroke="#ced0d6" stroke-width="1" stroke-linecap="round" stroke-linejoin="round"><rect x="2.5" y="1.5" width="7" height="12" rx="1"/><path d="M5 3.5 H7"/><rect x="7.5" y="8.5" width="6" height="4" fill="#2b2d30" stroke="#b189f5"/><path d="M6.5 14 H14.5" stroke="#b189f5"/><circle cx="13" cy="14" r="2" fill="#5fb865" stroke="none"/></svg><svg style="left:285.0px;top:309.0px" width="16" height="16" viewBox="0 0 16 16" fill="none" stroke="#6f737a" stroke-width="1" stroke-linecap="round" stroke-linejoin="round"><path d="M4.5 4.5 L11.5 11.5 M11.5 4.5 L4.5 11.5"/></svg><svg style="left:607.5px;top:42.5px" width="16" height="16" viewBox="0 0 16 16" fill="none" stroke="#ced0d6" stroke-width="1" stroke-linecap="round" stroke-linejoin="round"><path d="M2.5 2.5 H13 L8 8 L13 13.5 H2.5 Z" stroke="#b189f5"/></svg><svg style="left:728.0px;top:42.5px" width="16" height="16" viewBox="0 0 16 16" fill="none" stroke="#ced0d6" stroke-width="1" stroke-linecap="round" stroke-linejoin="round"><path d="M2.5 2.5 H13 L8 8 L13 13.5 H2.5 Z" stroke="#b189f5"/></svg><svg style="left:847.0px;top:42.5px" width="16" height="16" viewBox="0 0 16 16" fill="none" stroke="#ced0d6" stroke-width="1" stroke-linecap="round" stroke-linejoin="round"><path d="M2.5 2.5 H13 L8 8 L13 13.5 H2.5 Z" stroke="#b189f5"/></svg><svg style="left:1020.0px;top:42.5px" width="16" height="16" viewBox="0 0 16 16" fill="none" stroke="#ced0d6" stroke-width="1" stroke-linecap="round" stroke-linejoin="round"><path d="M2.5 2.5 H13 L8 8 L13 13.5 H2.5 Z" stroke="#b189f5"/></svg><svg style="left:705.0px;top:42.0px" width="16" height="16" viewBox="0 0 16 16" fill="none" stroke="#6f737a" stroke-width="1" stroke-linecap="round" stroke-linejoin="round"><path d="M4.5 4.5 L11.5 11.5 M11.5 4.5 L4.5 11.5"/></svg><svg style="left:1104.0px;top:41.0px" width="16" height="16" viewBox="0 0 16 16" fill="none" stroke="#ced0d6" stroke-width="1" stroke-linecap="round" stroke-linejoin="round"><path d="M2 13 Q1 8.5 4 7 Q7 5.5 10 6.5 Q10.5 3.5 13 3.5 Q15 3.8 14.8 5.8 Q14.5 7.2 13.2 7 Q12.8 10 10.8 11 L10.5 13 H9 L8.5 11.5 Q6.8 12 5.2 11.5 L4.8 13 Z M10 6.5 Q11 8 12.5 7.5"/><circle cx="11.8" cy="5.2" r=".5" fill="#ced0d6"/><path d="M9 9 H15 L12 12 L15 15 H9 Z" stroke="#b189f5" fill="#1e1f22"/></svg><svg style="left:1770.0px;top:42.0px" width="16" height="16" viewBox="0 0 16 16" fill="none" stroke="#ced0d6" stroke-width="1.3" stroke-linecap="round" stroke-linejoin="round"><path d="M2 3 H14 M2 6.5 H14 M2 10 H14 M2 13.5 H14"/></svg><div style="left:1794px;top:39px;width:24px;height:22px;background:#43454a;border-radius:4px"></div><svg style="left:1798.0px;top:42.0px" width="16" height="16" viewBox="0 0 16 16" fill="none" stroke="#ced0d6" stroke-width="1.1" stroke-linecap="round" stroke-linejoin="round"><path d="M1 3 H6 M1 6.5 H6 M1 10 H6 M1 13.5 H6"/><rect x="8.5" y="2" width="6.5" height="12" rx="1.2"/></svg><svg style="left:1826.0px;top:42.0px" width="16" height="16" viewBox="0 0 16 16" fill="none" stroke="#ced0d6" stroke-width="1.1" stroke-linecap="round" stroke-linejoin="round"><rect x="2" y="2" width="12" height="12" rx="1"/><path d="M2 9 L8.5 14 M2 8.5 Q5 7 9.5 13.5"/><circle cx="10.5" cy="5.5" r="1.5"/></svg><div style="left:1851px;top:40px;width:1px;height:20px;background:#3d3f43;"></div><svg style="left:1860.0px;top:42.0px" width="16" height="16" viewBox="0 0 16 16" fill="none" stroke="#ced0d6" stroke-width="1" stroke-linecap="round" stroke-linejoin="round"><circle cx="8" cy="3.5" r="1" fill="#ced0d6" stroke="none"/><circle cx="8" cy="8" r="1" fill="#ced0d6" stroke="none"/><circle cx="8" cy="12.5" r="1" fill="#ced0d6" stroke="none"/></svg><svg style="left:1896.0px;top:42.0px" width="16" height="16" viewBox="0 0 16 16" fill="none" stroke="#ced0d6" stroke-width="1" stroke-linecap="round" stroke-linejoin="round"><path d="M3 12.5 H13 Q11.5 11 11.5 8 Q11.5 3.5 8 3.5 Q4.5 3.5 4.5 8 Q4.5 11 3 12.5 Z M6.5 14.5 H9.5"/><circle cx="12" cy="3" r="2.5" fill="#548af7" stroke="none"/></svg><svg style="left:1896.0px;top:74.0px" width="16" height="16" viewBox="0 0 16 16" fill="none" stroke="#ced0d6" stroke-width="1" stroke-linecap="round" stroke-linejoin="round"><path d="M2 13 Q1 8.5 4 7 Q7 5.5 10 6.5 Q10.5 3.5 13 3.5 Q15 3.8 14.8 5.8 Q14.5 7.2 13.2 7 Q12.8 10 10.8 11 L10.5 13 H9 L8.5 11.5 Q6.8 12 5.2 11.5 L4.8 13 Z M10 6.5 Q11 8 12.5 7.5"/><circle cx="11.8" cy="5.2" r=".5" fill="#ced0d6"/></svg><svg style="left:1896.0px;top:108.0px" width="16" height="16" viewBox="0 0 16 16" fill="none" stroke="#ced0d6" stroke-width="1" stroke-linecap="round" stroke-linejoin="round"><path d="M7 14.5 H3.5 Q2.5 14.5 2.5 13.5 V2.5 Q2.5 1.5 3.5 1.5 H8.5 Q9.5 1.5 9.5 2.5 V9 M5 3.5 H7"/><path d="M8 14.5 Q8 10.5 11.5 10.5 Q15 10.5 15 14.5 Z"/></svg><svg style="left:45.0px;top:340.0px" width="16" height="16" viewBox="0 0 16 16" fill="none" stroke="#ced0d6" stroke-width="1" stroke-linecap="round" stroke-linejoin="round"><path d="M8 1.5 V7"/><path d="M4.5 3.5 A6 6 0 1 0 11.5 3.5"/></svg><svg style="left:70.5px;top:340.0px" width="16" height="16" viewBox="0 0 16 16" fill="none" stroke="#ced0d6" stroke-width="1" stroke-linecap="round" stroke-linejoin="round"><path d="M1.5 6 H4 L8 2.5 V13.5 L4 10 H1.5 Z M10 5.5 Q11.5 8 10 10.5 M12 3.5 Q15 8 12 12.5"/></svg><svg style="left:95.0px;top:340.0px" width="16" height="16" viewBox="0 0 16 16" fill="none" stroke="#ced0d6" stroke-width="1" stroke-linecap="round" stroke-linejoin="round"><path d="M2.5 6 H5 L9 2.5 V13.5 L5 10 H2.5 Z M11 5.5 Q12.5 8 11 10.5"/></svg><svg style="left:122.5px;top:340.0px" width="16" height="16" viewBox="0 0 16 16" fill="none" stroke="#ced0d6" stroke-width="1" stroke-linecap="round" stroke-linejoin="round"><rect x="1.5" y="1.5" width="7" height="13" rx=".8"/><path d="M4.5 3.5 H5.5"/><path d="M11 2.5 Q14.5 4 14.5 8.5 Q14.5 12 12 14" stroke="#548af7"/><path d="M10.5 1 L11 3 L13 2.5" stroke="#548af7"/></svg><svg style="left:149.0px;top:340.0px" width="16" height="16" viewBox="0 0 16 16" fill="none" stroke="#ced0d6" stroke-width="1" stroke-linecap="round" stroke-linejoin="round"><rect x="7.5" y="1.5" width="7" height="13" rx=".8"/><path d="M10.5 3.5 H11.5"/><path d="M5 2.5 Q1.5 4 1.5 8.5 Q1.5 12 4 14" stroke="#548af7"/><path d="M5.5 1 L5 3 L3 2.5" stroke="#548af7"/></svg><svg style="left:175.5px;top:340.0px" width="16" height="16" viewBox="0 0 16 16" fill="none" stroke="#ced0d6" stroke-width="1" stroke-linecap="round" stroke-linejoin="round"><path d="M11.5 4 L4.5 8 L11.5 12 Z"/></svg><svg style="left:201.0px;top:340.0px" width="16" height="16" viewBox="0 0 16 16" fill="none" stroke="#ced0d6" stroke-width="1" stroke-linecap="round" stroke-linejoin="round"><circle cx="8" cy="8" r="5.3"/></svg><svg style="left:227.0px;top:340.0px" width="16" height="16" viewBox="0 0 16 16" fill="none" stroke="#ced0d6" stroke-width="1" stroke-linecap="round" stroke-linejoin="round"><rect x="4" y="4" width="8" height="8"/></svg><svg style="left:253.0px;top:340.0px" width="16" height="16" viewBox="0 0 16 16" fill="none" stroke="#ced0d6" stroke-width="1" stroke-linecap="round" stroke-linejoin="round"><path d="M1.5 5 Q1.5 4 2.5 4 H4.5 L5.5 2.5 H10.5 L11.5 4 H13.5 Q14.5 4 14.5 5 V13 Q14.5 14 13.5 14 H2.5 Q1.5 14 1.5 13 Z"/><circle cx="8" cy="9" r="2.8"/></svg><svg style="left:279.0px;top:340.0px" width="16" height="16" viewBox="0 0 16 16" fill="none" stroke="#ced0d6" stroke-width="1" stroke-linecap="round" stroke-linejoin="round"><rect x="1" y="3.5" width="10" height="9" rx=".8"/><path d="M11 7 L15 4.5 V11.5 L11 9"/></svg><svg style="left:305.0px;top:340.0px" width="16" height="16" viewBox="0 0 16 16" fill="none" stroke="#ced0d6" stroke-width="1" stroke-linecap="round" stroke-linejoin="round"><path d="M3 4 A6 6 0 1 0 8 2" /><path d="M3 1 V4.5 H6.5"/><path d="M8 5.5 V8.5 H10.5"/></svg><svg style="left:331.0px;top:340.0px" width="16" height="16" viewBox="0 0 16 16" fill="none" stroke="#ced0d6" stroke-width="1" stroke-linecap="round" stroke-linejoin="round"><rect x="1" y="2" width="13" height="8" rx="1"/><path d="M3.5 4.5 H4.5 M6 4.5 H7 M8.5 4.5 H9.5 M11 4.5 H12 M4 7.5 H10"/><rect x="10.5" y="9" width="4" height="6" rx="2"/></svg><svg style="left:357.0px;top:340.0px" width="16" height="16" viewBox="0 0 16 16" fill="none" stroke="#ced0d6" stroke-width="1" stroke-linecap="round" stroke-linejoin="round"><circle cx="8" cy="3.5" r="1" fill="#ced0d6" stroke="none"/><circle cx="8" cy="8" r="1" fill="#ced0d6" stroke="none"/><circle cx="8" cy="12.5" r="1" fill="#ced0d6" stroke="none"/></svg><svg style="left:513.0px;top:340.5px" width="16" height="16" viewBox="0 0 16 16" fill="none" stroke="#5fad65" stroke-width="1" stroke-linecap="round" stroke-linejoin="round"><path d="M3 8.5 L6.5 12 L13 4.5" stroke-width="1.8"/></svg><svg style="left:563.5px;top:550.5px" width="16" height="16" viewBox="0 0 16 16" fill="none" stroke="#dfe1e5" stroke-width="1.1" stroke-linecap="round" stroke-linejoin="round"><path d="M8 1.5 V14.5 M1.5 8 H14.5"/></svg><div style="left:565px;top:584px;width:13px;height:1px;background:#5b5e64;"></div><svg style="left:563.5px;top:629.0px" width="16" height="16" viewBox="0 0 16 16" fill="none" stroke="#6f737a" stroke-width="1" stroke-linecap="round" stroke-linejoin="round"><rect x="2" y="3" width="12" height="10" rx="1"/><path d="M5 9 V6 H8 M11 7 V10 H8"/></svg><svg style="left:730.0px;top:489.0px" width="16" height="16" viewBox="0 0 16 16" fill="none" stroke="#f2c55c" stroke-width="1" stroke-linecap="round" stroke-linejoin="round"><path d="M5 10.5 Q3 9 3 6.5 A5 5 0 0 1 13 6.5 Q13 9 11 10.5 Z" fill="#f2c55c" stroke="none"/><path d="M5.5 12.2 H10.5 M6 14 H10" stroke="#f2c55c" stroke-width="1.2"/></svg><div style="left:1424px;top:68px;width:111px;height:22px;background:#1e1f22;border-radius:5px"></div><svg style="left:1432.0px;top:71.5px" width="14" height="14" viewBox="0 0 16 16" fill="none" stroke="#ced0d6" stroke-width="1" stroke-linecap="round" stroke-linejoin="round"><path d="M8 1.5 L15 14 H1 Z" fill="#f2c55c" stroke="#f2c55c" stroke-linejoin="round"/><path d="M8 6 V10" stroke="#1e1f22" stroke-width="1.6"/><circle cx="8" cy="12" r=".9" fill="#1e1f22" stroke="none"/></svg><span class="t" style="left:1448px;top:69.5px;line-height:20px;font-size:13px;color:#dfe1e5;">9</span><svg style="left:1459.5px;top:71.5px" width="16" height="16" viewBox="0 0 16 16" fill="none" stroke="#ced0d6" stroke-width="1" stroke-linecap="round" stroke-linejoin="round"><path d="M2.5 7.5 L6 11 L13.5 2.5" stroke="#5fad65" stroke-width="1.6"/><path d="M2 14.5 L4 13 L6 14.5 L8 13 L10 14.5 L12 13" stroke="#5fad65" stroke-width="1"/></svg><span class="t" style="left:1477.5px;top:69.5px;line-height:20px;font-size:13px;color:#dfe1e5;transform:scaleX(0.7407);transform-origin:0 50%;">11</span><svg style="left:1496.0px;top:71.0px" width="16" height="16" viewBox="0 0 16 16" fill="none" stroke="#ced0d6" stroke-width="1" stroke-linecap="round" stroke-linejoin="round"><path d="M4 10 L8 6 L12 10"/></svg><svg style="left:1517.0px;top:71.0px" width="16" height="16" viewBox="0 0 16 16" fill="none" stroke="#ced0d6" stroke-width="1" stroke-linecap="round" stroke-linejoin="round"><path d="M4 6 L8 10 L12 6"/></svg><svg style="left:1550.5px;top:74.5px" width="17" height="17" viewBox="0 0 16 16" fill="none" stroke="#ced0d6" stroke-width="1" stroke-linecap="round" stroke-linejoin="round"><rect x="1.5" y="1.5" width="12" height="12" rx="1"/><path d="M6 1.5 V13.5 M6 7.5 H13.5"/><path d="M13 16 L16 13 V16 Z" fill="#ced0d6" stroke="none"/></svg><svg style="left:1796.0px;top:75.0px" width="16" height="16" viewBox="0 0 16 16" fill="none" stroke="#5fad65" stroke-width="1" stroke-linecap="round" stroke-linejoin="round"><path d="M3 8.5 L6.5 12 L13 4.5" stroke-width="1.8"/></svg><div style="left:4px;top:39px;width:24px;height:24px;background:#43454a;border-radius:5px"></div><svg style="left:8.0px;top:43.0px" width="16" height="16" viewBox="0 0 16 16" fill="none" stroke="#ced0d6" stroke-width="1" stroke-linecap="round" stroke-linejoin="round"><path d="M1.5 3.5 Q1.5 2.5 2.5 2.5 H6 L7.5 4 H13.5 Q14.5 4 14.5 5 V12.5 Q14.5 13.5 13.5 13.5 H2.5 Q1.5 13.5 1.5 12.5 Z" fill="none"/></svg><svg style="left:8.0px;top:73.5px" width="16" height="16" viewBox="0 0 16 16" fill="none" stroke="#ced0d6" stroke-width="1" stroke-linecap="round" stroke-linejoin="round"><circle cx="8.5" cy="4.5" r="2.8"/><rect x="1.5" y="8.5" width="5" height="5"/><path d="M11.5 8.5 L15 13.5 H8 Z"/></svg><div style="left:4px;top:104px;width:24px;height:1px;background:#43454a;"></div><div style="left:4px;top:114px;width:24px;height:24px;background:#43454a;border-radius:5px"></div><svg style="left:8.0px;top:118.0px" width="16" height="16" viewBox="0 0 16 16" fill="none" stroke="#ced0d6" stroke-width="1" stroke-linecap="round" stroke-linejoin="round"><rect x="2.5" y="1.5" width="7" height="12" rx="1"/><path d="M5 3.5 H7"/><rect x="7.5" y="8.5" width="6" height="4" fill="#2b2d30" stroke="#b189f5"/><path d="M6.5 14 H14.5" stroke="#b189f5"/><circle cx="13" cy="14" r="2" fill="#5fb865" stroke="none"/></svg><svg style="left:8.0px;top:149.5px" width="16" height="16" viewBox="0 0 16 16" fill="none" stroke="#ced0d6" stroke-width="1" stroke-linecap="round" stroke-linejoin="round"><circle cx="3" cy="8" r="1" fill="#ced0d6" stroke="none"/><circle cx="8" cy="8" r="1" fill="#ced0d6" stroke="none"/><circle cx="13" cy="8" r="1" fill="#ced0d6" stroke="none"/></svg><svg style="left:8.0px;top:832.0px" width="16" height="16" viewBox="0 0 16 16" fill="none" stroke="#ced0d6" stroke-width="1" stroke-linecap="round" stroke-linejoin="round"><path d="M2 2.5 H10.5 Q13 2.5 14 5 M2 2.5 V5.5 M6 2.5 V14.5 H8.5 V2.5"/></svg><div style="left:4px;top:860px;width:24px;height:24px;background:#43454a;border-radius:5px"></div><svg style="left:8.0px;top:864.0px" width="16" height="16" viewBox="0 0 16 16" fill="none" stroke="#ced0d6" stroke-width="1" stroke-linecap="round" stroke-linejoin="round"><path d="M3.5 2.5 L13 8 L3.5 13.5 Z"/><circle cx="13" cy="3.5" r="2.5" fill="#5fb865" stroke="none"/></svg><svg style="left:8.0px;top:896.0px" width="16" height="16" viewBox="0 0 16 16" fill="none" stroke="#ced0d6" stroke-width="1" stroke-linecap="round" stroke-linejoin="round"><path d="M1 6 H5 M1 9 H5 M1 12 H5 M6 3 L8 5.5 H11 L13 3 V11 Q13 14 9.5 14 Q6 14 6 11 Z"/><circle cx="8.3" cy="9" r=".5" fill="#ced0d6"/><circle cx="10.7" cy="9" r=".5" fill="#ced0d6"/></svg><svg style="left:8.0px;top:927.5px" width="16" height="16" viewBox="0 0 16 16" fill="none" stroke="#ced0d6" stroke-width="1" stroke-linecap="round" stroke-linejoin="round"><circle cx="8" cy="8.5" r="6.5"/><path d="M8 5 V9.5 M8 11.5 V12"/><circle cx="12.5" cy="3.5" r="2.8" fill="#e55353" stroke="none"/></svg><svg style="left:8.0px;top:959.5px" width="16" height="16" viewBox="0 0 16 16" fill="none" stroke="#ced0d6" stroke-width="1" stroke-linecap="round" stroke-linejoin="round"><rect x="1.5" y="2.5" width="13" height="11" rx="1"/><path d="M4 6 L6.5 8 L4 10 M8 10.5 H11.5"/></svg><svg style="left:8.0px;top:992.0px" width="16" height="16" viewBox="0 0 16 16" fill="none" stroke="#ced0d6" stroke-width="1" stroke-linecap="round" stroke-linejoin="round"><circle cx="4.5" cy="3.5" r="2"/><circle cx="11.5" cy="6" r="2"/><path d="M4.5 5.5 V15 M4.5 11 H9 Q11.5 11 11.5 8"/></svg><svg style="left:94.0px;top:682.0px" width="16" height="16" viewBox="0 0 16 16" fill="none" stroke="#ced0d6" stroke-width="1" stroke-linecap="round" stroke-linejoin="round"><path d="M2.5 13 Q2.5 7 8 7 Q13.5 7 13.5 13 Z" stroke="#5fb865"/><path d="M4 5.5 L5.5 7.5" stroke="#5fb865"/><circle cx="5.5" cy="11" r=".6" fill="#5fb865" stroke="none"/><circle cx="10.5" cy="11" r=".6" fill="#5fb865" stroke="none"/><circle cx="13" cy="4" r="2.5" fill="#5fb865" stroke="none"/></svg><svg style="left:142.0px;top:682.0px" width="16" height="16" viewBox="0 0 16 16" fill="none" stroke="#6f737a" stroke-width="1" stroke-linecap="round" stroke-linejoin="round"><path d="M4.5 4.5 L11.5 11.5 M11.5 4.5 L4.5 11.5"/></svg><svg style="left:38.0px;top:713.0px" width="16" height="16" viewBox="0 0 16 16" fill="none" stroke="#ced0d6" stroke-width="1.1" stroke-linecap="round" stroke-linejoin="round"><path d="M12 4 A6 6 0 1 0 7 14"/><path d="M12.5 1 V4.5 H9"/><path d="M9.5 9 L14.5 12 L9.5 15 Z" stroke="#5fb865"/></svg><div style="left:66px;top:715px;width:13px;height:13px;background:#5a3535;border:1.3px solid #e06c6c;border-radius:2px"></div><div style="left:88px;top:711px;width:1px;height:20px;background:#3d3f43;"></div><svg style="left:97.0px;top:713.0px" width="16" height="16" viewBox="0 0 16 16" fill="none" stroke="#ced0d6" stroke-width="1" stroke-linecap="round" stroke-linejoin="round"><circle cx="8" cy="3.5" r="1" fill="#ced0d6" stroke="none"/><circle cx="8" cy="8" r="1" fill="#ced0d6" stroke="none"/><circle cx="8" cy="12.5" r="1" fill="#ced0d6" stroke="none"/></svg><svg style="left:41.0px;top:749.0px" width="16" height="16" viewBox="0 0 16 16" fill="none" stroke="#a8abb1" stroke-width="1.2" stroke-linecap="round" stroke-linejoin="round"><path d="M8 14 V2.5 M3.5 7 L8 2.5 L12.5 7"/></svg><svg style="left:41.0px;top:775.0px" width="16" height="16" viewBox="0 0 16 16" fill="none" stroke="#a8abb1" stroke-width="1.2" stroke-linecap="round" stroke-linejoin="round"><path d="M8 2 V13.5 M3.5 9 L8 13.5 L12.5 9"/></svg><div style="left:38px;top:798px;width:22px;height:22px;background:#43454a;border-radius:4px"></div><svg style="left:41.0px;top:801.0px" width="16" height="16" viewBox="0 0 16 16" fill="none" stroke="#ced0d6" stroke-width="1" stroke-linecap="round" stroke-linejoin="round"><path d="M2 3.5 H14 M2 7.5 H14 Q15 11.5 11.5 11.5 H8 M10 9.5 L8 11.5 L10 13.5 M2 11.5 H5"/></svg><div style="left:38px;top:824px;width:22px;height:22px;background:#43454a;border-radius:4px"></div><svg style="left:41.0px;top:827.0px" width="16" height="16" viewBox="0 0 16 16" fill="none" stroke="#ced0d6" stroke-width="1" stroke-linecap="round" stroke-linejoin="round"><path d="M2 3.5 H6 M2 7.5 H6 M2 11.5 H6 M1.5 14.5 H14.5 M11 2.5 V12 M8 9 L11 12 L14 9"/></svg><svg style="left:41.0px;top:853.5px" width="16" height="16" viewBox="0 0 16 16" fill="none" stroke="#ced0d6" stroke-width="1" stroke-linecap="round" stroke-linejoin="round"><path d="M4 5 V2 H12 V5 M4 12 H2 V6 Q2 5 3 5 H13 Q14 5 14 6 V12 H12 M4 9.5 H12 V14.5 H4 Z"/></svg><svg style="left:41.0px;top:879.5px" width="16" height="16" viewBox="0 0 16 16" fill="none" stroke="#ced0d6" stroke-width="1" stroke-linecap="round" stroke-linejoin="round"><path d="M2 3.5 H14 M6 3.5 V1.5 H10 V3.5 M3.5 3.5 V14.5 H12.5 V3.5 M6.5 6.5 V12 M9.5 6.5 V12"/></svg><svg style="left:1551.5px;top:973.0px" width="15" height="15" viewBox="0 0 16 16" fill="none" stroke="#ced0d6" stroke-width="1" stroke-linecap="round" stroke-linejoin="round"><circle cx="8" cy="8" r="7.5" fill="#548af7" stroke="none"/><path d="M8 7 V12" stroke="#ffffff" stroke-width="1.8"/><circle cx="8" cy="4.3" r="1.1" fill="#ffffff" stroke="none"/></svg><div style="left:14px;top:1025px;width:8px;height:8px;background:transparent;border:1.3px solid #548af7;border-radius:2px"></div><div style="left:165px;top:1025px;width:8px;height:8px;background:transparent;border:1.3px solid #548af7;border-radius:2px"></div><div style="left:259px;top:1025px;width:8px;height:8px;background:transparent;border:1.3px solid #548af7;border-radius:2px"></div><svg style="left:145.5px;top:1022.0px" width="14" height="14" viewBox="0 0 16 16" fill="none" stroke="#a8abb1" stroke-width="1" stroke-linecap="round" stroke-linejoin="round"><path d="M6 4 L10 8 L6 12"/></svg><svg style="left:201.5px;top:1022.0px" width="14" height="14" viewBox="0 0 16 16" fill="none" stroke="#a8abb1" stroke-width="1" stroke-linecap="round" stroke-linejoin="round"><path d="M6 4 L10 8 L6 12"/></svg><svg style="left:239.5px;top:1022.0px" width="14" height="14" viewBox="0 0 16 16" fill="none" stroke="#a8abb1" stroke-width="1" stroke-linecap="round" stroke-linejoin="round"><path d="M6 4 L10 8 L6 12"/></svg><svg style="left:300.5px;top:1022.0px" width="14" height="14" viewBox="0 0 16 16" fill="none" stroke="#a8abb1" stroke-width="1" stroke-linecap="round" stroke-linejoin="round"><path d="M6 4 L10 8 L6 12"/></svg><svg style="left:344.5px;top:1022.0px" width="14" height="14" viewBox="0 0 16 16" fill="none" stroke="#a8abb1" stroke-width="1" stroke-linecap="round" stroke-linejoin="round"><path d="M6 4 L10 8 L6 12"/></svg><svg style="left:389.0px;top:1022.0px" width="14" height="14" viewBox="0 0 16 16" fill="none" stroke="#a8abb1" stroke-width="1" stroke-linecap="round" stroke-linejoin="round"><path d="M6 4 L10 8 L6 12"/></svg><svg style="left:454.5px;top:1022.0px" width="14" height="14" viewBox="0 0 16 16" fill="none" stroke="#a8abb1" stroke-width="1" stroke-linecap="round" stroke-linejoin="round"><path d="M6 4 L10 8 L6 12"/></svg><svg style="left:560.0px;top:1022.0px" width="14" height="14" viewBox="0 0 16 16" fill="none" stroke="#a8abb1" stroke-width="1" stroke-linecap="round" stroke-linejoin="round"><path d="M6 4 L10 8 L6 12"/></svg><svg style="left:679.5px;top:1022.0px" width="14" height="14" viewBox="0 0 16 16" fill="none" stroke="#a8abb1" stroke-width="1" stroke-linecap="round" stroke-linejoin="round"><path d="M6 4 L10 8 L6 12"/></svg><svg style="left:578.0px;top:1021.0px" width="16" height="16" viewBox="0 0 16 16" fill="none" stroke="#ced0d6" stroke-width="1" stroke-linecap="round" stroke-linejoin="round"><path d="M2.5 2.5 H13 L8 8 L13 13.5 H2.5 Z" stroke="#b189f5"/></svg><svg style="left:698.0px;top:1021.0px" width="16" height="16" viewBox="0 0 16 16" fill="none" stroke="#548af7" stroke-width="1.1" stroke-linecap="round" stroke-linejoin="round"><path d="M8 1.5 L14 5 V11.5 L8 15 L2 11.5 V5 Z M2 5 L8 8.5 L14 5 M8 8.5 V15"/><circle cx="8" cy="8.5" r="2.3"/></svg><svg style="left:1447.5px;top:1020.0px" width="17" height="17" viewBox="0 0 16 16" fill="none" stroke="#a8abb1" stroke-width="1.2" stroke-linecap="round" stroke-linejoin="round"><circle cx="8" cy="8" r="7"/><path d="M4.5 8 L7 10.5 L11.5 5.5"/></svg><svg style="left:1795.0px;top:1020.0px" width="16" height="16" viewBox="0 0 16 16" fill="none" stroke="#a8abb1" stroke-width="1.2" stroke-linecap="round" stroke-linejoin="round"><path d="M1.5 2.5 H14.5 V11.5 H9 L6 14.5 V11.5 H1.5 Z M8 5 V8 M8 9.5 V10"/></svg><svg style="left:1888.0px;top:1020.0px" width="16" height="16" viewBox="0 0 16 16" fill="none" stroke="#a8abb1" stroke-width="1.2" stroke-linecap="round" stroke-linejoin="round"><rect x="1.5" y="7.5" width="9" height="7" rx="1"/><path d="M9 7.5 V5 A2.5 2.5 0 0 1 14 5 V6"/><circle cx="6" cy="11" r=".8" fill="#a8abb1"/></svg><svg style="left:1575px;top:326px" width="144" height="144" viewBox="0 0 1040 1040" preserveAspectRatio="none">
<rect x="0" y="0" width="1040" height="1040" fill="#ffffff"/>
<g stroke="none">
<polygon points="440,300 520,200 600,165 655,215 640,300 590,380 460,380" fill="#111111"/>
<polygon points="330,330 440,160 495,195 385,370" fill="#0d0d0d"/>
<path d="M360 330 L455 185" stroke="#d8d8d8" stroke-width="6"/>
<polygon points="430,310 560,330 560,390 420,370" fill="#d9b48a"/>
<polygon points="640,330 760,95 830,130 710,370" fill="#d6a95c"/>
<polygon points="615,390 770,165 800,180 650,400" fill="#3a6fb0"/>
<polygon points="690,400 860,60 915,85 745,420" fill="#111111"/>
<polygon points="745,400 905,105 935,130 780,420" fill="#2f5fd0"/>
<polygon points="860,275 940,265 945,320 870,330" fill="#f0d070"/>
<polygon points="720,300 790,290 800,400 730,410" fill="#b03040"/>
<rect x="305" y="330" width="65" height="110" fill="#7a2a35"/>
<rect x="225" y="270" width="95" height="190" rx="18" fill="#0f0f0f"/>
<rect x="215" y="455" width="115" height="235" fill="#2a5bc0"/>
<polygon points="610,690 700,450 745,470 655,715" fill="#2f5fd0"/>
<circle cx="490" cy="545" r="165" fill="#ea6f9f"/>
</g>
<g stroke="#ffffff" stroke-width="14" fill="none" opacity=".85">
<path d="M380 470 L430 640 M450 450 L510 690 M530 440 L590 680 M600 460 L640 600"/>
</g>
<g stroke="#2e3138" stroke-width="6" fill="none" stroke-linejoin="round">
<path d="M155 420 L830 400 L700 720 L180 680 Z"/>
<path d="M158 480 L805 462 M160 540 L780 525 M162 600 L755 590 M165 650 L730 650"/>
<path d="M210 418 L224 683 M265 417 L268 687 M320 415 L312 690 M375 413 L356 693 M430 412 L400 696 M485 410 L444 700 M540 408 L488 703 M595 407 L532 706 M650 405 L576 710 M705 404 L620 713 M760 402 L664 716 M815 400 L708 720 " stroke="#4a4e57" stroke-width="5"/>
<path d="M830 400 L890 320"/>
<path d="M400 700 L420 800 M600 705 Q720 780 740 860"/>
<path d="M145 830 L740 870 M190 800 L600 800" stroke-width="9"/>
<path d="M150 830 L160 900"/>
</g>
<g stroke="#111111" stroke-width="9" fill="#ffffff">
<circle cx="175" cy="905" r="26"/><circle cx="235" cy="955" r="26"/><circle cx="690" cy="950" r="26"/>
</g>
</svg><svg style="left:231px;top:376px" width="116" height="116" viewBox="0 0 1040 1040" preserveAspectRatio="none">
<rect x="0" y="0" width="1040" height="1040" fill="#ffffff"/>
<g stroke="none">
<polygon points="440,300 520,200 600,165 655,215 640,300 590,380 460,380" fill="#111111"/>
<polygon points="330,330 440,160 495,195 385,370" fill="#0d0d0d"/>
<path d="M360 330 L455 185" stroke="#d8d8d8" stroke-width="6"/>
<polygon points="430,310 560,330 560,390 420,370" fill="#d9b48a"/>
<polygon points="640,330 760,95 830,130 710,370" fill="#d6a95c"/>
<polygon points="615,390 770,165 800,180 650,400" fill="#3a6fb0"/>
<polygon points="690,400 860,60 915,85 745,420" fill="#111111"/>
<polygon points="745,400 905,105 935,130 780,420" fill="#2f5fd0"/>
<polygon points="860,275 940,265 945,320 870,330" fill="#f0d070"/>
<polygon points="720,300 790,290 800,400 730,410" fill="#b03040"/>
<rect x="305" y="330" width="65" height="110" fill="#7a2a35"/>
<rect x="225" y="270" width="95" height="190" rx="18" fill="#0f0f0f"/>
<rect x="215" y="455" width="115" height="235" fill="#2a5bc0"/>
<polygon points="610,690 700,450 745,470 655,715" fill="#2f5fd0"/>
<circle cx="490" cy="545" r="165" fill="#ea6f9f"/>
</g>
<g stroke="#ffffff" stroke-width="14" fill="none" opacity=".85">
<path d="M380 470 L430 640 M450 450 L510 690 M530 440 L590 680 M600 460 L640 600"/>
</g>
<g stroke="#2e3138" stroke-width="6" fill="none" stroke-linejoin="round">
<path d="M155 420 L830 400 L700 720 L180 680 Z"/>
<path d="M158 480 L805 462 M160 540 L780 525 M162 600 L755 590 M165 650 L730 650"/>
<path d="M210 418 L224 683 M265 417 L268 687 M320 415 L312 690 M375 413 L356 693 M430 412 L400 696 M485 410 L444 700 M540 408 L488 703 M595 407 L532 706 M650 405 L576 710 M705 404 L620 713 M760 402 L664 716 M815 400 L708 720 " stroke="#4a4e57" stroke-width="5"/>
<path d="M830 400 L890 320"/>
<path d="M400 700 L420 800 M600 705 Q720 780 740 860"/>
<path d="M145 830 L740 870 M190 800 L600 800" stroke-width="9"/>
<path d="M150 830 L160 900"/>
</g>
<g stroke="#111111" stroke-width="9" fill="#ffffff">
<circle cx="175" cy="905" r="26"/><circle cx="235" cy="955" r="26"/><circle cx="690" cy="950" r="26"/>
</g>
</svg><span class="t" style="left:235px;top:367px;line-height:9px;font-size:7px;color:#ffffff;font-weight:700">6:01</span><svg style="left:252.5px;top:367.5px" width="7" height="7" viewBox="0 0 16 16" fill="none" stroke="#ffffff" stroke-width="1" stroke-linecap="round" stroke-linejoin="round"><circle cx="8" cy="8" r="5" stroke-width="2.5"/></svg><div style="left:262px;top:368px;width:7px;height:6px;background:#e8eaf0;"></div><div style="left:272px;top:368px;width:7px;height:6px;background:#e8eaf0;"></div><svg style="left:370.0px;top:367.0px" width="8" height="8" viewBox="0 0 16 16" fill="none" stroke="#ffffff" stroke-width="1" stroke-linecap="round" stroke-linejoin="round"><path d="M1 4 Q8 -1 15 4 L8 13 Z" fill="#ffffff" stroke="none"/></svg><svg style="left:378.0px;top:367.0px" width="8" height="8" viewBox="0 0 16 16" fill="none" stroke="#ffffff" stroke-width="1" stroke-linecap="round" stroke-linejoin="round"><path d="M15 1 V15 H1 Z" fill="none" stroke="#ffffff" stroke-width="2"/></svg><div style="left:390px;top:367px;width:5px;height:8px;background:#ffffff;border-radius:1px"></div><div style="left:1528px;top:447px;width:8px;height:64px;background:#4d6499;"></div><div style="left:1528px;top:511px;width:8px;height:43px;background:#4a4c50;"></div><div style="left:666px;top:65px;width:18px;height:8px;border:1.5px solid #ced0d6;border-top:none;border-radius:0 0 2px 2px"></div><div style="left:669px;top:67px;width:12px;height:2px;background:#ced0d6;"></div></body></html>
